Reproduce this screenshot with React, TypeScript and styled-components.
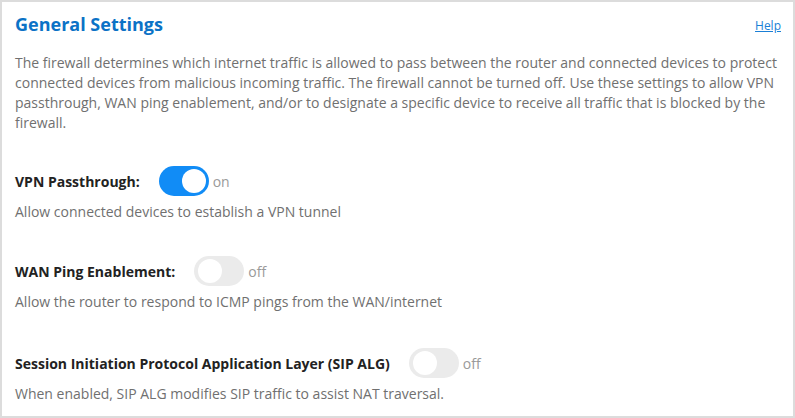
import React from "react";
import styled, { createGlobalStyle } from "styled-components";

const Global = createGlobalStyle`
  html, body { margin: 0; padding: 0; background: #fff; }
  body { font-family: "Open Sans", "Liberation Sans", sans-serif; }
  * { box-sizing: border-box; }
`;

const Card = styled.section`
  width: 795px;
  height: 418px;
  border: 2px solid #dcdcdc;
  padding: 10px 10px 0 13px;
  background: #fff;
`;

const Header = styled.header`
  display: flex;
  align-items: center;
  justify-content: space-between;
  height: 24px;
`;

const Title = styled.h2`
  margin: 0;
  font-size: 18px;
  line-height: 24px;
  font-weight: 700;
  color: #0b72c6;
`;

const HelpLink = styled.a`
  font-size: 12px;
  color: #1a7fd6;
  text-decoration: underline;
  margin-right: 2px;
  margin-top: 3px;
  cursor: pointer;
`;

const Intro = styled.p`
  margin: 17px 0 0 0;
  font-size: 14px;
  line-height: 20px;
  color: #707070;
`;

const Setting = styled.div<{ $gap: number }>`
  margin-top: ${(p) => p.$gap}px;
`;

const Row = styled.div`
  display: flex;
  align-items: center;
  height: 30px;
`;

const Label = styled.span`
  font-size: 14px;
  font-weight: 700;
  color: #222;
  margin-right: 19px;
`;

const Track = styled.span<{ $on: boolean }>`
  position: relative;
  display: inline-block;
  width: 50px;
  height: 30px;
  border-radius: 15px;
  background: ${(p) => (p.$on ? "#118cf6" : "#ebebeb")};
`;

const Knob = styled.span<{ $on: boolean }>`
  position: absolute;
  top: 3px;
  left: ${(p) => (p.$on ? "23px" : "4px")};
  width: 24px;
  height: 24px;
  border-radius: 50%;
  background: #fff;
`;

const State = styled.span`
  font-size: 14px;
  color: #9a9a9a;
  margin-left: 4px;
`;

const Hint = styled.p`
  margin: 6px 0 0 0;
  font-size: 14px;
  line-height: 20px;
  color: #707070;
`;

type Item = { label: string; on: boolean; hint: string; gap: number };

const items: Item[] = [
  { label: "VPN Passthrough:", on: true, hint: "Allow connected devices to establish a VPN tunnel", gap: 33 },
  { label: "WAN Ping Enablement:", on: false, hint: "Allow the router to respond to ICMP pings from the WAN/internet", gap: 34 },
  {
    label: "Session Initiation Protocol Application Layer (SIP ALG)",
    on: false,
    hint: "When enabled, SIP ALG modifies SIP traffic to assist NAT traversal.",
    gap: 36,
  },
];

export default function App() {
  return (
    <>
      <Global />
      <Card>
        <Header>
          <Title>General Settings</Title>
          <HelpLink>Help</HelpLink>
        </Header>
        <Intro>
          The firewall determines which internet traffic is allowed to pass between the router and connected devices to protect
          connected devices from malicious incoming traffic. The firewall cannot be turned off. Use these settings to allow VPN
          passthrough, WAN ping enablement, and/or to designate a specific device to receive all traffic that is blocked by the
          firewall.
        </Intro>
        {items.map((it) => (
          <Setting key={it.label} $gap={it.gap}>
            <Row>
              <Label>{it.label}</Label>
              <Track $on={it.on}>
                <Knob $on={it.on} />
              </Track>
              <State>{it.on ? "on" : "off"}</State>
            </Row>
            <Hint>{it.hint}</Hint>
          </Setting>
        ))}
      </Card>
    </>
  );
}
